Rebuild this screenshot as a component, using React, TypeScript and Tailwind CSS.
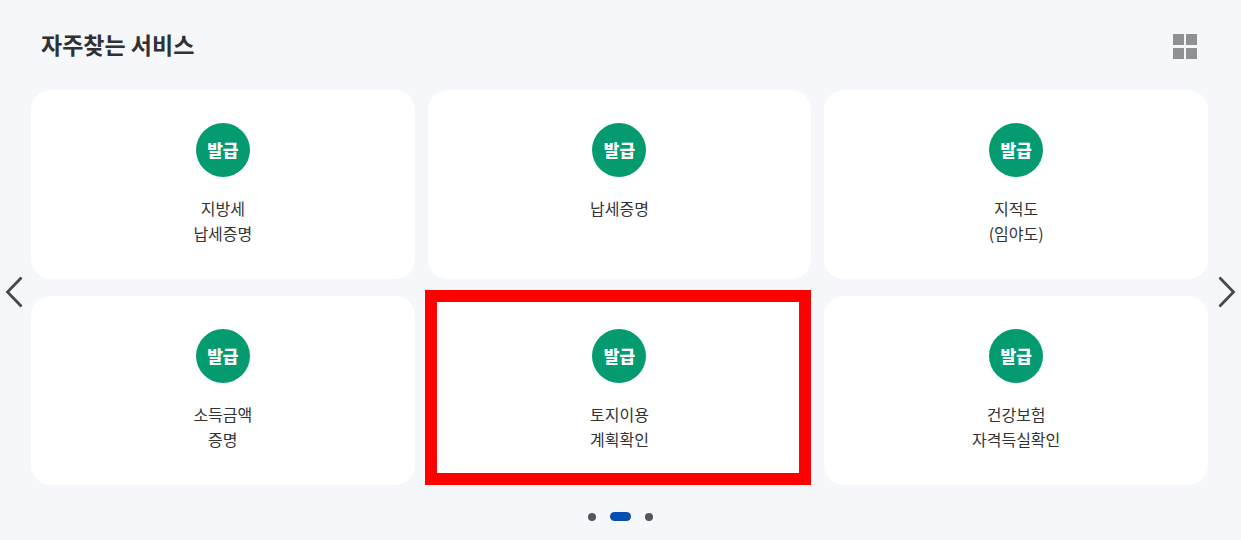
type Service = { lines: string[]; highlighted?: boolean };

const services: Service[] = [
  { lines: ["지방세", "납세증명"] },
  { lines: ["납세증명"] },
  { lines: ["지적도", "(임야도)"] },
  { lines: ["소득금액", "증명"] },
  { lines: ["토지이용", "계획확인"], highlighted: true },
  { lines: ["건강보험", "자격득실확인"] },
];

function ServiceCard({ lines, highlighted }: Service) {
  return (
    <li className="relative">
      <a
        href="#"
        className="flex h-full flex-col items-center gap-[19px] rounded-[20px] bg-white py-[33px] text-center"
      >
        <span className="flex size-[54px] items-center justify-center rounded-full bg-[#049b70] text-[17px] leading-6 font-black text-white">
          발급
        </span>
        <span className="text-base leading-[25px] text-[#333]">
          {lines.map((line) => (
            <span key={line} className="block">
              {line}
            </span>
          ))}
        </span>
      </a>
      {highlighted && (
        <span className="pointer-events-none absolute -top-1.5 right-0 bottom-0 -left-[3px] border-12 border-[#ff0000]" />
      )}
    </li>
  );
}

function Arrow({ direction }: { direction: "left" | "right" }) {
  return (
    <svg width="18" height="32" viewBox="0 0 18 32" fill="none" stroke="#48484b" strokeWidth="2.8">
      <path d={direction === "left" ? "M16.5 1.5 2.5 16l14 14.5" : "M1.5 1.5 15.5 16l-14 14.5"} />
    </svg>
  );
}

export default function App() {
  return (
    <section className="min-h-screen bg-[#f5f7fb] font-['Noto_Sans_CJK_KR','Noto_Sans',sans-serif]">
      <header className="flex h-[90px] items-center justify-between pr-11 pb-0.5 pl-[41px]">
        <h2 className="text-[23px] leading-8 font-bold text-[#2f3133]">자주찾는 서비스</h2>
        <button type="button" aria-label="전체보기" className="mt-1">
          <svg width="24" height="25" viewBox="0 0 24 25" fill="#909193">
            <path d="M0 0h11v11H0zM13 0h11v11H13zM0 14h11v11H0zM13 14h11v11H13z" />
          </svg>
        </button>
      </header>

      <div className="flex items-center">
        <button type="button" aria-label="이전" className="flex w-[31px] shrink-0 justify-start pt-2 pl-[5px]">
          <Arrow direction="left" />
        </button>
        <ul className="grid flex-1 grid-cols-3 gap-x-[13px] gap-y-[17px]">
          {services.map((service) => (
            <ServiceCard key={service.lines.join("")} {...service} />
          ))}
        </ul>
        <button type="button" aria-label="다음" className="flex w-[33px] shrink-0 justify-end pt-2 pr-[5px]">
          <Arrow direction="right" />
        </button>
      </div>

      <div className="flex items-center justify-center gap-3.5 pt-[27px]">
        <button type="button" aria-label="1페이지" className="size-2 rounded-full bg-[#55565b]" />
        <button type="button" aria-label="2페이지" aria-current="true" className="h-[9px] w-[21px] rounded-full bg-[#064db2]" />
        <button type="button" aria-label="3페이지" className="size-2 rounded-full bg-[#55565b]" />
      </div>
    </section>
  );
}
